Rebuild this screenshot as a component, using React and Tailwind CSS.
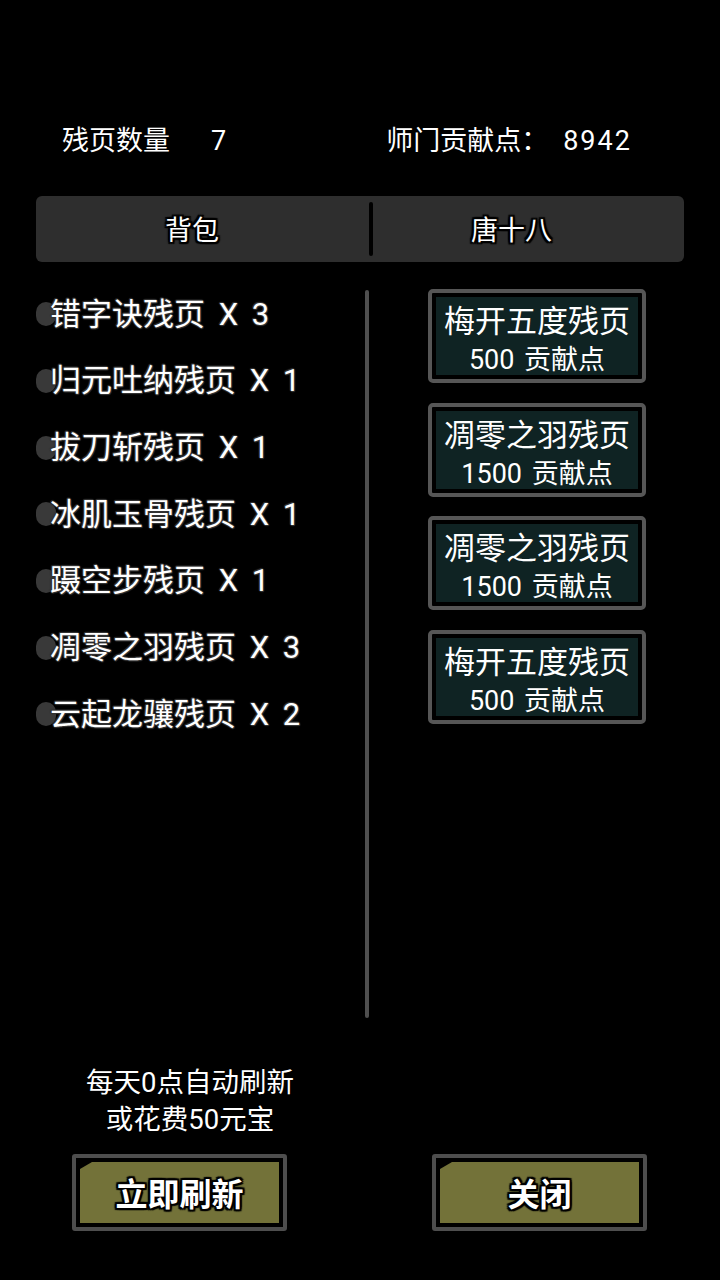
const font = { fontFamily: 'Roboto, "Noto Sans CJK SC", "Noto Sans", sans-serif' };

const outline =
  '[text-shadow:2px_0_1px_#000,-2px_0_1px_#000,0_2px_1px_#000,0_-2px_1px_#000,2px_2px_1px_#000,-2px_-2px_1px_#000,2px_-2px_1px_#000,-2px_2px_1px_#000]';

const softOutline =
  '[text-shadow:1px_0_1px_#333,-1px_0_1px_#333,0_1px_1px_#333,0_-1px_1px_#333,1px_1px_1px_#333,-1px_-1px_1px_#333]';

const bag = [
  ['错字诀残页', 3],
  ['归元吐纳残页', 1],
  ['拔刀斩残页', 1],
  ['冰肌玉骨残页', 1],
  ['蹑空步残页', 1],
  ['凋零之羽残页', 3],
  ['云起龙骧残页', 2]
];

const shop = [
  ['梅开五度残页', 500],
  ['凋零之羽残页', 1500],
  ['凋零之羽残页', 1500],
  ['梅开五度残页', 500]
];

function ShopCard({ name, price }) {
  return (
    <div className="h-[94px] w-[218px] rounded-[5px] border-4 border-[#565656] bg-black p-[4px]">
      <div className="flex h-full flex-col items-center bg-[#0f2323] text-white">
        <p className="mt-[9px] text-[31px] leading-[32px]">{name}</p>
        <p className="mt-[8px] text-[27px] leading-[28px] [word-spacing:3px]">{price} 贡献点</p>
      </div>
    </div>
  );
}

function OliveButton({ label }) {
  return (
    <button className="h-[77px] w-[215px] rounded-[3px] border-4 border-[#4e4e4e] bg-black p-[4px]">
      <div className="flex h-full items-center justify-center bg-[#737239] pt-[4px] [clip-path:polygon(0_7px,12px_0,100%_0,100%_100%,0_100%)]">
        <span className={`text-[32px] font-bold leading-none text-white ${outline}`}>{label}</span>
      </div>
    </button>
  );
}

export default function App() {
  return (
    <div className="relative h-[1280px] w-[720px] overflow-hidden bg-black text-white" style={font}>
      <div className="h-[123px]" />
      <div className="flex h-[36px] items-center text-[27px] leading-[36px]">
        <span className="ml-[62px]">残页数量</span>
        <span className="ml-[41px]">7</span>
        <span className="ml-[160px]">师门贡献点：</span>
        <span className="ml-[15px] tracking-[2px]">8942</span>
      </div>

      <div className="mx-[36px] mt-[37px] flex h-[66px] rounded-[6px] bg-[#2e2e2e]">
        <div className="flex w-[333px] items-center pl-[129px] pt-[4px]">
          <span className={`text-[27px] leading-none ${outline}`}>背包</span>
        </div>
        <div className="my-[6px] w-[4px] rounded-full bg-black" />
        <div className="flex flex-1 items-center pl-[98px] pt-[4px]">
          <span className={`text-[27px] leading-none ${outline}`}>唐十八</span>
        </div>
      </div>

      <div className="mt-[19px] flex h-[737px]">
        <div className="w-[365px] pl-[36px]">
          {bag.map(([name, n]) => (
            <div key={name} className="flex h-[66.67px] items-center">
              <div className="h-[24px] w-[20px] rounded-full bg-[#393939]" />
              <span
                className={`relative -ml-[6px] text-[31px] leading-none [word-spacing:6px] ${softOutline}`}
              >
                {name} X {n}
              </span>
            </div>
          ))}
        </div>
        <div className="mt-[9px] h-[728px] w-[4px] rounded-full bg-[#4f4f4f]" />
        <div className="flex flex-col gap-[19.7px] pl-[59px] pt-[8px]">
          {shop.map(([name, price], i) => (
            <ShopCard key={i} name={name} price={price} />
          ))}
        </div>
      </div>

      <div className="mt-[46px] w-[380px] text-center text-[27.5px] leading-[37px]">
        <p>每天0点自动刷新</p>
        <p>或花费50元宝</p>
      </div>

      <div className="mt-[16px] flex">
        <div className="ml-[72px]">
          <OliveButton label="立即刷新" />
        </div>
        <div className="ml-[145px]">
          <OliveButton label="关闭" />
        </div>
      </div>
    </div>
  );
}
